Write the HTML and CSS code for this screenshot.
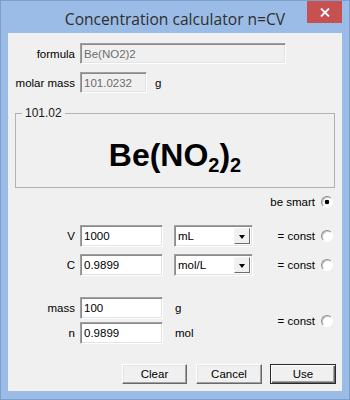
FILE: index.html
```html
<!DOCTYPE html>
<html lang="en">
<head>
    <meta charset="UTF-8">
    <meta name="viewport" content="width=device-width, initial-scale=1.0">
    <title>Concentration calculator n=CV</title>
    <link rel="stylesheet" href="styles.css">
</head>
<body>
    <div class="window">
        <div class="titlebar">
            <h1 class="title">Concentration calculator n=CV</h1>
            <button class="close" title="Close">
                <svg width="10" height="9" viewBox="0 0 10 9">
                    <path d="M1 0.5 L9 8.5 M9 0.5 L1 8.5" stroke="#fff" stroke-width="1.8" fill="none"/>
                </svg>
            </button>
        </div>
        <div class="panel">
            <div class="info">
                <label class="lbl" for="formula">formula</label>
                <input class="field field-formula" id="formula" value="Be(NO2)2" disabled>
                <label class="lbl" for="molarMass">molar mass</label>
                <div class="with-unit">
                    <input class="field field-mass" id="molarMass" value="101.0232" disabled>
                    <span class="unit">g</span>
                </div>
            </div>

            <fieldset class="group">
                <legend>101.02</legend>
                <div class="formula">Be(NO<sub>2</sub>)<sub>2</sub></div>
            </fieldset>

            <div class="smart">
                <span>be smart</span>
                <span class="radio checked"></span>
            </div>

            <div class="calc calc-vc">
                <label class="lbl" for="volume">V</label>
                <input class="field" id="volume" value="1000">
                <div class="select"><span class="select-text">mL</span><span class="drop"></span></div>
                <div class="const"><span>= const</span><span class="radio"></span></div>

                <label class="lbl" for="conc">C</label>
                <input class="field" id="conc" value="0.9899">
                <div class="select"><span class="select-text">mol/L</span><span class="drop"></span></div>
                <div class="const"><span>= const</span><span class="radio"></span></div>
            </div>

            <div class="calc calc-mn">
                <label class="lbl" for="mass">mass</label>
                <input class="field" id="mass" value="100">
                <span class="unit-col">g</span>
                <div class="const const-span"><span>= const</span><span class="radio"></span></div>

                <label class="lbl" for="moles">n</label>
                <input class="field" id="moles" value="0.9899">
                <span class="unit-col">mol</span>
            </div>

            <div class="actions">
                <button class="btn">Clear</button>
                <button class="btn">Cancel</button>
                <button class="btn btn-default">Use</button>
            </div>
        </div>
    </div>
</body>
</html>
```
FILE: styles.css
```css
body {
    margin: 0;
    padding: 0;
    background-color: #9bbce6;
}

.window {
    width: 350px;
    height: 400px;
    box-sizing: border-box;
    border: 1px solid #7b9fcf;
    background-color: #9bbce6;
    display: flex;
    flex-direction: column;
    font-family: "Liberation Sans", Arial, sans-serif;
    font-size: 11.5px;
    color: #000;
}

.titlebar {
    height: 32px;
    display: grid;
    grid-template-columns: 1fr auto 1fr;
    align-items: start;
}

.title {
    grid-column: 2;
    margin: 0;
    padding-top: 9px;
    font-family: "Open Sans", "Noto Sans", sans-serif;
    font-size: 15.6px;
    font-weight: 400;
    line-height: 18px;
    color: #2e2e2e;
    white-space: nowrap;
}

.close {
    grid-column: 3;
    justify-self: end;
    width: 35px;
    height: 22px;
    margin-right: 7px;
    padding: 0;
    border: none;
    background-color: #c75050;
    display: flex;
    align-items: center;
    justify-content: center;
}

.panel {
    flex: 1;
    margin: 0 7px 8px;
    background-color: #f0f0f0;
}

.lbl {
    grid-column: 1;
    text-align: right;
    padding-right: 5px;
    align-self: center;
    white-space: nowrap;
}

.field {
    box-sizing: border-box;
    height: 22px;
    margin: 0;
    padding: 0 3px;
    border: 1px solid;
    border-color: #a0a0a0 #ffffff #ffffff #a0a0a0;
    box-shadow: inset 1px 1px 0 #8a8a8a, inset -1px -1px 0 #e3e3e3;
    background-color: #fff;
    font-family: "Liberation Sans", Arial, sans-serif;
    font-size: 11.5px;
    color: #000;
    outline: none;
}

.field:disabled {
    background-color: #f0f0f0;
    color: #6d6d6d;
}

/* formula / molar mass */
.info {
    display: grid;
    grid-template-columns: 72px 1fr;
    row-gap: 8px;
    padding-top: 10px;
}

.field-formula {
    width: 206px;
    height: 21px;
}

.with-unit {
    display: flex;
    align-items: center;
}

.field-mass {
    width: 67px;
    height: 21px;
}

.unit {
    margin-left: 8px;
}

/* group box with the pretty formula */
.group {
    margin: 13px 7px 0;
    padding: 17px 0 14px;
    border: 1px solid #b2b2b2;
}

.group legend {
    margin-left: 6px;
    padding: 0 3px;
    font-size: 12px;
    line-height: 14px;
    color: #1a1a1a;
}

.formula {
    text-align: center;
    font-size: 32px;
    font-weight: 700;
    line-height: 36px;
}

.formula sub {
    font-size: 20px;
    line-height: 0;
    vertical-align: -6px;
}

/* radios */
.radio {
    display: inline-block;
    box-sizing: border-box;
    width: 12px;
    height: 12px;
    border-radius: 50%;
    border: 1px solid;
    border-color: #8c8c8c #ffffff #ffffff #8c8c8c;
    background-color: #fff;
    box-shadow: inset 1px 1px 0 #c8c8c8;
}

.radio.checked {
    background: radial-gradient(circle, #000 0, #000 2px, #fff 2.6px);
}

.smart {
    display: flex;
    justify-content: flex-end;
    align-items: center;
    gap: 6px;
    height: 14px;
    margin-top: 7px;
    padding-right: 9px;
}

/* V / C and mass / n grids */
.calc {
    display: grid;
    grid-template-columns: 72px 83px 90px 1fr auto;
    align-items: center;
}

.calc-vc {
    margin-top: 16px;
    row-gap: 7px;
}

.calc-mn {
    margin-top: 21px;
    row-gap: 3px;
}

.select {
    box-sizing: border-box;
    width: 79px;
    height: 22px;
    margin-left: 11px;
    display: flex;
    align-items: stretch;
    border: 1px solid;
    border-color: #a0a0a0 #ffffff #ffffff #a0a0a0;
    box-shadow: inset 1px 1px 0 #8a8a8a, inset -1px -1px 0 #e3e3e3;
    background-color: #fff;
    padding: 2px 2px 2px 0;
}

.select-text {
    flex: 1;
    padding-left: 3px;
    line-height: 16px;
}

.drop {
    width: 16px;
    position: relative;
    background-color: #f0f0f0;
    border: 1px solid;
    border-color: #f4f4f4 #6b6b6b #6b6b6b #f4f4f4;
    box-sizing: border-box;
}

.drop::after {
    content: "";
    position: absolute;
    left: 4px;
    top: 6px;
    border-left: 3.5px solid transparent;
    border-right: 3.5px solid transparent;
    border-top: 4px solid #000;
}

.unit-col {
    grid-column: 3;
    margin-left: 12px;
}

.const {
    grid-column: 5;
    display: flex;
    align-items: center;
    gap: 6px;
    padding-right: 9px;
}

.const-span {
    grid-row: 1 / span 2;
}

/* bottom buttons */
.actions {
    display: flex;
    justify-content: flex-end;
    gap: 8px;
    margin-top: 20px;
    padding-right: 6px;
}

.btn {
    box-sizing: border-box;
    width: 66px;
    height: 20px;
    padding: 0;
    border: 1px solid;
    border-color: #ffffff #696969 #696969 #ffffff;
    box-shadow: inset -1px -1px 0 #a0a0a0, inset 1px 1px 0 #e3e3e3;
    background-color: #f0f0f0;
    font-family: "Liberation Sans", Arial, sans-serif;
    font-size: 11.5px;
    color: #000;
}

.btn:first-child {
    width: 65px;
    margin-right: 1px;
}

.btn-default {
    border-color: #2a2a2a;
    box-shadow: inset 1px 1px 0 #fff, inset -1px -1px 0 #696969, inset -2px -2px 0 #a0a0a0;
}
```
